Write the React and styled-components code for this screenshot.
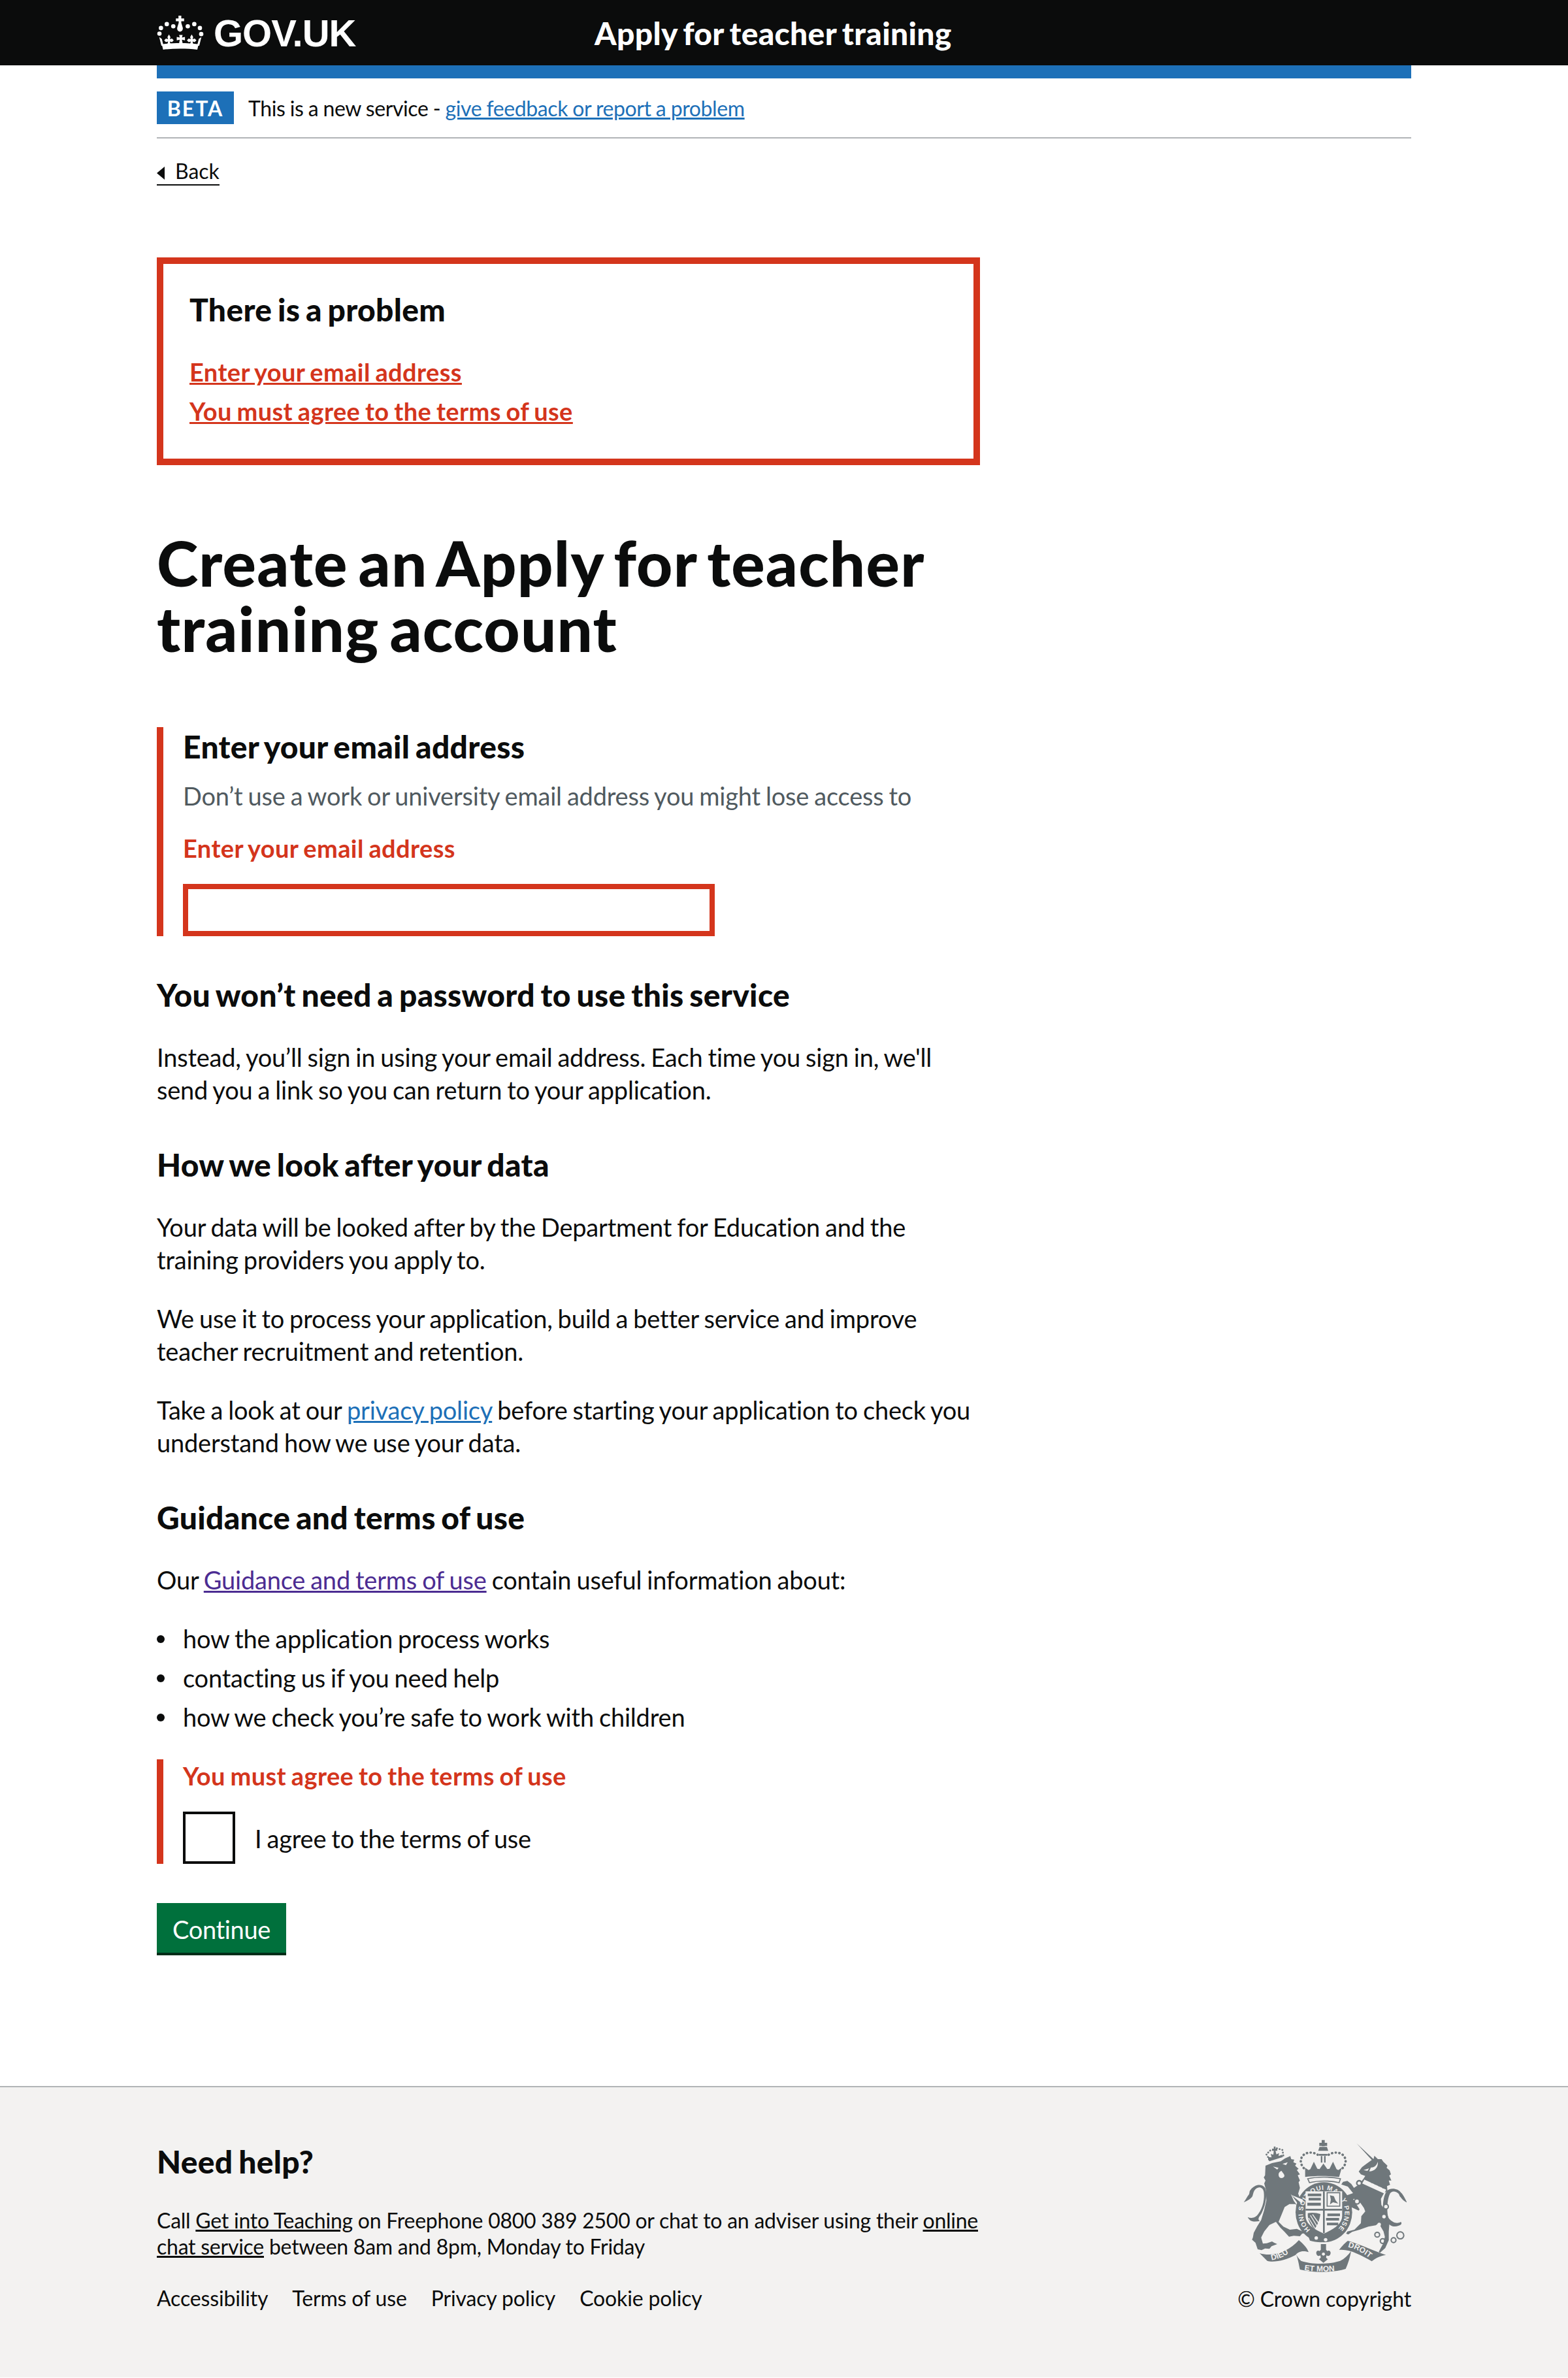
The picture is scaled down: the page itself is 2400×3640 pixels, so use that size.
import styled, { createGlobalStyle } from 'styled-components';

const Global = createGlobalStyle`
  html, body { margin: 0; padding: 0; background: #fff; }
  body { font-family: Lato, "Open Sans", Arial, sans-serif; color: #0b0c0c; }
  * { box-sizing: border-box; }
`;

const CrownLogo = () => (
  <svg width="72" height="52" viewBox="30 33 215 157" fill="#fff" aria-hidden="true">
    <path d="M129 33h13v13h13v13h-13v7l6 20c4 10-3 21-12 21s-16-11-12-21l6-20v-7h-13V46h12z" />
    <circle cx="75" cy="72" r="10" />
    <circle cx="105" cy="82" r="10" />
    <circle cx="172" cy="82" r="10" />
    <circle cx="202" cy="72" r="10" />
    <circle cx="228" cy="90" r="10" />
    <circle cx="48" cy="90" r="10" />
    <circle cx="41" cy="116" r="10" />
    <circle cx="234" cy="118" r="10" />
    <path d="M52 165C100 158 175 158 222 165L216 190C165 184 110 184 58 190Z" />
    <path d="M40 132L52 140L60 172L50 172ZM235 132L223 140L215 172L225 172Z" />
    <path d="M132 122h16l-3 12 14-3v16l-14-3 3 16h-16l3-16-14 3v-16l14 3z" />
    <path d="M85 120l7 12-3 10 10-3 8 8-8 8-10-3 3 12h-14l3-12-10 3-8-8 8-8 10 3-3-10z" />
    <path d="M190 120l7 12-3 10 10-3 8 8-8 8-10-3 3 12h-14l3-12-10 3-8-8 8-8 10 3-3-10z" />
  </svg>
);

const Crest = () => (
  <CrestSvg width="250" height="205" viewBox="160 135 750 615" fill="#6f777b" aria-hidden="true">
    {/* lion */}
    <path d="M262 258l30-12 40-8 20-14 24-10 4 14 14 2-4 12 14 6-6 10 16 14-8 6 14 20-10 4 10 24-6 8 6 26-8 26 14 36 14 30 8 24-14 8-16-6-8-30-10-14-28 0-22 14-18 44-10 24 22 22 30 14 32-4 30 14 10 6-16 2-10 12-28-2-22 4-22-24-18-18-20-26-30 14-24 30-14 28 8 28 18-2 24-8 10 6 14 6-26 10-10 12-20-2-16 8-18-4-10-30-16-14 4-10 4-22 16-30 18-28 14-46 10-44-2-50-8-28 6-14-8-14 6-10z" />
    <path d="M336 282c-14 4-16 16-12 26 4 8 14 8 20 4 6-4 6-10 2-16 0 0-6-6-10-14zM296 262l26 6-6 8zM340 250l24-8-8 14zM378 388l22 30 16 22-6 4-18-24z" fill="#f3f2f1" />
    <path d="M236 512c-24 4-44 6-56-18 18 8 38 4 50-16 22-30 28-70 24-100-4-22-24-26-38-12-10 10-10 22-14 32-6 10-20 20-40 28 10-12 14-24 24-36 4-8 0-14 8-22 18-24 50-30 66-8 10 16 8 70-16 116-8 14-22 26-8 36z" />
    {/* lion crown */}
    <g fill="none" stroke="#6f777b" strokeWidth="8" strokeLinecap="round" strokeDasharray="1 12">
      <path d="M280 230l-14-24 20-20M314 178l26 8 4 26" />
    </g>
    <path d="M280 238l62-20-4-10-16 6 2-14-12 6-4-16h8v-10h-8v-10h-8v10h-8v10h8l-2 18-12-4 4 16-16-2 0 12z" />
    {/* unicorn */}
    <path d="M680 155L758 228L762 212L778 228L795 228L803 240L822 258L818 268L832 280L838 298L830 304L840 326L828 326L834 346L820 352L822 374L806 384L792 410L794 438L818 474L832 510L828 560L828 600L812 636L788 658L782 654L804 612L810 584L804 560L782 522L768 532L734 538L694 552L660 562L642 574L632 570L638 560L670 552L700 522L702 490L720 468L714 452L690 418L670 410L642 416L624 398L664 384L640 354L610 344L618 332L638 328L656 342L668 360L690 345L712 318L720 305L700 298L690 285L705 265L725 250L750 232Z" />
    <path d="M640 400l16-2 38 60-4 6-36-16-14-28z" />
    <path d="M716 322l100 46-8 18-102-46z" fill="#f3f2f1" />
    <path d="M722 324l6-12 6 12 12-4 4 14 12-6 4 14 14-4 4 12 12-4 6 14 12-2" fill="none" stroke="#6f777b" strokeWidth="6" />
    <path d="M746 266c16 2 26-10 32-26 2 26-14 44-40 44z" fill="#f3f2f1" />
    <path d="M712 278l26-8-8 12z" fill="#f3f2f1" />
    <path d="M826 498c22 24 40 28 58 18 6 10 0 14-12 18-24 10-46-4-60-28-16-34-14-100 6-130 14-20 54-14 66 6 10 8 20 30 28 46-14-8-22-14-30-26-6-4-4-12-12-18-12-12-34-10-38 6-12 26-14 80-6 108z" />
    <g fill="#f3f2f1" stroke="#6f777b" strokeWidth="7">
      <circle cx="692" cy="338" r="11" />
      <circle cx="682" cy="422" r="12" />
    </g>
    <circle cx="815" cy="446" r="11" fill="#f3f2f1" stroke="#6f777b" strokeWidth="6" />
    <circle cx="806" cy="492" r="8" fill="#f3f2f1" />
    <circle cx="784" cy="528" r="8" fill="#f3f2f1" />
    <g fill="none" stroke="#6f777b" strokeWidth="6">
      <circle cx="775" cy="575" r="11" />
      <circle cx="800" cy="604" r="11" />
      <circle cx="850" cy="600" r="11" />
      <circle cx="881" cy="578" r="16" />
    </g>
    {/* royal crown */}
    <path d="M520 140h14v13h11v14h-11v2h-14v-2h-11v-14h11zM510 172h34l6 18h-46zM508 204h38v8h-38zM516 214h7v30h-7zM531 214h7v30h-7z" />
    <g fill="none" stroke="#6f777b" strokeWidth="11" strokeLinecap="round" strokeDasharray="1 16">
      <path d="M502 208c-30-20-76-10-78 28 0 14 8 30 20 38" />
      <path d="M552 208c30-20 76-10 78 28 0 14-8 30-20 38" />
    </g>
    <path d="M444 268l16 10 8-4 16-34 16 32 10 2 18-26 18 26 10-2 16-32 16 34 8 4 16-10-12 42c-44-6-112-6-156 0z" />
    <path d="M456 318c40-10 106-10 150 0l-6 18c-40-10-96-10-136 0z" fill="none" stroke="#6f777b" strokeWidth="5" />
    {/* garter */}
    <ellipse cx="530" cy="472" rx="130" ry="138" />
    <path d="M380 392l54 22-4 18z" fill="#f3f2f1" />
    <defs>
      <path id="garter" d="M468 552A96 104 0 1 1 592 552" />
      <path id="scrollLeft" d="M290 692c40-6 80-26 112-62" />
      <path id="scrollRight" d="M640 632c40 8 80 32 112 62" />
      <path id="scrollMid" d="M440 738c50 8 120 8 174-2" />
    </defs>
    <CrestLabel $size={30}><textPath href="#garter" textLength="485" lengthAdjust="spacing">HONI SOIT QUI MAL Y PENSE</textPath></CrestLabel>
    {/* shield */}
    <path d="M446 376h168v112c0 40-42 62-84 82-42-20-84-42-84-82z" fill="#f3f2f1" />
    <path d="M526 376h8v192h-8zM446 456h168v8H446z" />
    <path d="M456 386h62v12h-62zM460 406h56v12h-56zM454 428h62v14h-62zM546 478h58v12h-58zM540 498h60v12h-60zM544 520h52v12h-52z" />
    <path d="M545 382h58v62h-58z" fill="none" stroke="#6f777b" strokeWidth="5" />
    <path d="M558 394l18 4 8 20 12 14-24-6-14 10 4-22z" />
    <path d="M456 476c20-4 40-2 58 4-4 30-16 58-28 68-16-14-32-42-30-72z" />
    <path d="M468 486l32 52M478 482l28 40M460 498l28 46" stroke="#f3f2f1" strokeWidth="4" />
    <path d="M452 564c50 34 106 34 150 0l-36 38c-40 12-72 8-100 0z" />
    <circle cx="495" cy="590" r="8" fill="#f3f2f1" />
    <circle cx="538" cy="598" r="8" fill="#f3f2f1" />
    {/* motto scroll */}
    <path d="M235 660C300 680 370 650 415 600C440 620 455 640 460 655C430 645 410 655 400 668C360 690 300 705 270 695Z" />
    <path d="M600 645C615 625 630 610 640 603C700 620 760 650 815 668C790 672 770 680 750 697C700 670 650 640 600 645Z" />
    <path d="M402 665C410 680 415 710 420 735C480 750 570 750 630 732C640 710 650 680 655 650C640 670 625 685 605 695C540 715 470 710 425 695C415 685 408 675 402 665Z" />
    <path d="M516 618h24v26l6 6c10-6 18 4 14 14-2 10-14 10-18 6l-2 10 8 8-20 16-20-16 8-8-2-10c-4 4-16 4-18-6-4-10 4-20 14-14l6-6z" />
    <circle cx="528" cy="664" r="7" fill="#f3f2f1" />
    <CrestLabel $size={36}><textPath href="#scrollLeft">DIEU</textPath></CrestLabel>
    <CrestLabel $size={36}><textPath href="#scrollRight">DROIT</textPath></CrestLabel>
    <CrestLabel $size={36}><textPath href="#scrollMid">ET MON</textPath></CrestLabel>
  </CrestSvg>
);

const App = () => (
  <>
    <Global />
    <Header>
      <Container>
        <HeaderRow>
          <Logo>
            <CrownLogo />
            <LogoText>GOV.UK</LogoText>
          </Logo>
          <ServiceName>Apply for teacher training</ServiceName>
        </HeaderRow>
      </Container>
    </Header>
    <Container>
      <BlueBar />
      <PhaseBanner>
        <PhaseTag>BETA</PhaseTag>
        <span>
          This is a new service - <Link href="#">give feedback or report a problem</Link>
        </span>
      </PhaseBanner>
      <BackLink href="#">Back</BackLink>
      <Main>
        <ErrorSummary>
          <SummaryTitle>There is a problem</SummaryTitle>
          <SummaryLink href="#">Enter your email address</SummaryLink>
          <SummaryLink href="#">You must agree to the terms of use</SummaryLink>
        </ErrorSummary>
        <Title>Create an Apply for teacher training account</Title>
        <ErrorGroup>
          <FieldLabel>Enter your email address</FieldLabel>
          <Hint>Don’t use a work or university email address you might lose access to</Hint>
          <ErrorMessage>Enter your email address</ErrorMessage>
          <TextInput type="email" />
        </ErrorGroup>
        <SectionTitle>You won’t need a password to use this service</SectionTitle>
        <Body>Instead, you’ll sign in using your email address. Each time you sign in, we'll send you a link so you can return to your application.</Body>
        <SectionTitle>How we look after your data</SectionTitle>
        <Body>Your data will be looked after by the Department for Education and the training providers you apply to.</Body>
        <Body>We use it to process your application, build a better service and improve teacher recruitment and retention.</Body>
        <Body>Take a look at our <Link href="#">privacy policy</Link> before starting your application to check you understand how we use your data.</Body>
        <SectionTitle>Guidance and terms of use</SectionTitle>
        <Body>Our <Link href="#" $visited>Guidance and terms of use</Link> contain useful information about:</Body>
        <BulletList>
          <li>how the application process works</li>
          <li>contacting us if you need help</li>
          <li>how we check you’re safe to work with children</li>
        </BulletList>
        <CheckGroup>
          <ErrorMessage>You must agree to the terms of use</ErrorMessage>
          <CheckRow>
            <CheckBox />
            <CheckText>I agree to the terms of use</CheckText>
          </CheckRow>
        </CheckGroup>
        <SubmitButton>Continue</SubmitButton>
      </Main>
    </Container>
    <Footer>
      <Container>
        <FooterRow>
          <FooterMain>
            <FooterTitle>Need help?</FooterTitle>
            <FooterText>
              Call <FooterLink href="#">Get into Teaching</FooterLink> on Freephone 0800 389 2500 or chat to an adviser using their <FooterLink href="#">online chat service</FooterLink> between 8am and 8pm, Monday to Friday
            </FooterText>
            <FooterNav>
              <FooterNavLink href="#">Accessibility</FooterNavLink>
              <FooterNavLink href="#">Terms of use</FooterNavLink>
              <FooterNavLink href="#">Privacy policy</FooterNavLink>
              <FooterNavLink href="#">Cookie policy</FooterNavLink>
            </FooterNav>
          </FooterMain>
          <Copyright>
            <Crest />
            <FooterNavLink href="#">© Crown copyright</FooterNavLink>
          </Copyright>
        </FooterRow>
      </Container>
    </Footer>
  </>
);

const CrestSvg = styled.svg`
  margin-right: 7px;
`;
const CrestLabel = styled.text`
  fill: #f3f2f1;
  font-family: "Liberation Sans", Arial, sans-serif;
  font-size: ${(p) => p.$size}px;
  font-weight: 700;
`;
const Container = styled.div`
  width: 1920px;
  margin: 0 auto;
`;
const Header = styled.header`
  height: 100px;
  background: #0b0c0c;
  color: #fff;
`;
const HeaderRow = styled.div`
  display: flex;
  align-items: center;
  height: 100px;
`;
const Logo = styled.div`
  display: flex;
  align-items: center;
  gap: 15px;
  width: 670px;
`;
const LogoText = styled.span`
  font-family: "Liberation Sans", Arial, sans-serif;
  font-size: 58px;
  font-weight: 700;
  letter-spacing: -1px;
`;
const ServiceName = styled.div`
  font-size: 48px;
  font-weight: 900;
  letter-spacing: 0.3px;
  word-spacing: -3px;
`;
const BlueBar = styled.div`
  height: 20px;
  background: #1d70b8;
`;
const PhaseBanner = styled.div`
  display: flex;
  align-items: center;
  gap: 22px;
  height: 92px;
  border-bottom: 2px solid #b1b4b6;
  font-size: 32px;
  letter-spacing: -0.4px;
  word-spacing: -0.5px;
`;
const PhaseTag = styled.strong`
  display: flex;
  align-items: center;
  justify-content: center;
  width: 118px;
  height: 50px;
  background: #1d70b8;
  color: #fff;
  font-size: 32px;
  letter-spacing: 2px;
`;
const Link = styled.a`
  color: ${(p) => (p.$visited ? '#4c2c92' : '#1d70b8')};
`;
const BackLink = styled.a`
  position: relative;
  display: inline-block;
  margin-top: 30px;
  padding-left: 28px;
  font-size: 32px;
  line-height: 40px;
  color: #0b0c0c;
  text-decoration: none;
  border-bottom: 2px solid #0b0c0c;

  &::before {
    content: '';
    position: absolute;
    left: 0;
    top: 13px;
    border-style: solid;
    border-width: 10px 12px 10px 0;
    border-color: transparent #0b0c0c transparent transparent;
  }
`;
const Main = styled.main`
  width: 1260px;
  padding-top: 110px;
  font-size: 38px;
  line-height: 50px;
  letter-spacing: -0.2px;
  word-spacing: -1.5px;
`;
const ErrorSummary = styled.div`
  display: flex;
  flex-direction: column;
  gap: 10px;
  padding: 40px 40px 48px;
  border: 10px solid #d4351c;
`;
const SummaryTitle = styled.h2`
  margin: 0 0 30px;
  font-size: 48px;
  line-height: 60px;
  font-weight: 900;
  letter-spacing: 0.3px;
  word-spacing: -3px;
`;
const SummaryLink = styled.a`
  color: #d4351c;
  font-weight: 700;
  letter-spacing: 0.4px;
  word-spacing: -2px;
`;
const Title = styled.h1`
  margin: 99px 0 102px;
  font-size: 96px;
  line-height: 100px;
  font-weight: 900;
  letter-spacing: 1.2px;
  word-spacing: -8px;
`;
const ErrorGroup = styled.div`
  display: flex;
  flex-direction: column;
  align-items: flex-start;
  padding-left: 30px;
  border-left: 10px solid #d4351c;
`;
const FieldLabel = styled.label`
  margin-bottom: 20px;
  font-size: 48px;
  line-height: 60px;
  font-weight: 900;
  letter-spacing: 0.3px;
  word-spacing: -3px;
`;
const Hint = styled.div`
  margin-bottom: 30px;
  color: #505a5f;
`;
const ErrorMessage = styled.div`
  margin-bottom: 30px;
  color: #d4351c;
  font-weight: 700;
  letter-spacing: 0.4px;
  word-spacing: -2px;
`;
const TextInput = styled.input`
  display: block;
  width: 814px;
  height: 80px;
  border: 8px solid #d4351c;
  border-radius: 0;
  background: #fff;
`;
const SectionTitle = styled.h2`
  margin: 60px 0 40px;
  font-size: 48px;
  line-height: 60px;
  font-weight: 900;
  letter-spacing: 0.3px;
  word-spacing: -3px;
`;
const Body = styled.p`
  margin: 0 0 40px;
`;
const BulletList = styled.ul`
  margin: 0 0 40px;
  padding: 0 0 0 40px;
  list-style: none;

  li {
    position: relative;
    margin-bottom: 10px;
  }

  li::before {
    content: '';
    position: absolute;
    left: -40px;
    top: 20px;
    width: 12px;
    height: 12px;
    border-radius: 50%;
    background: #0b0c0c;
  }
`;
const CheckGroup = styled.div`
  padding-left: 30px;
  border-left: 10px solid #d4351c;
`;
const CheckRow = styled.label`
  display: flex;
  align-items: center;
  gap: 30px;
`;
const CheckBox = styled.span`
  width: 80px;
  height: 80px;
  border: 4px solid #0b0c0c;
`;
const CheckText = styled.span`
  position: relative;
  top: 1px;
`;
const SubmitButton = styled.button`
  display: block;
  width: 198px;
  height: 80px;
  margin-top: 60px;
  padding: 0;
  border: 0;
  background: #00703c;
  box-shadow: inset 0 -4px 0 #002d18;
  color: #fff;
  font-family: inherit;
  font-size: 38px;
  letter-spacing: -0.35px;
`;
const Footer = styled.footer`
  height: 446px;
  margin-top: 200px;
  border-top: 2px solid #b1b4b6;
  background: #f3f2f1;
`;
const FooterRow = styled.div`
  display: flex;
  justify-content: space-between;
`;
const FooterMain = styled.div`
  width: 1260px;
  padding-top: 84px;
`;
const FooterTitle = styled.h2`
  margin: 0 0 40px;
  font-size: 48px;
  line-height: 60px;
  font-weight: 900;
  letter-spacing: 0.3px;
  word-spacing: -3px;
`;
const FooterText = styled.p`
  margin: 0 0 39px;
  font-size: 32px;
  line-height: 40px;
  letter-spacing: -0.25px;
`;
const FooterLink = styled.a`
  color: #0b0c0c;
`;
const FooterNav = styled.nav`
  display: flex;
  gap: 37px;
`;
const FooterNavLink = styled.a`
  font-size: 32px;
  line-height: 40px;
  letter-spacing: -0.15px;
  color: #0b0c0c;
  text-decoration: none;
`;
const Copyright = styled.div`
  display: flex;
  flex-direction: column;
  align-items: flex-end;
  gap: 20px;
  padding-top: 79px;
`;

export default App;
